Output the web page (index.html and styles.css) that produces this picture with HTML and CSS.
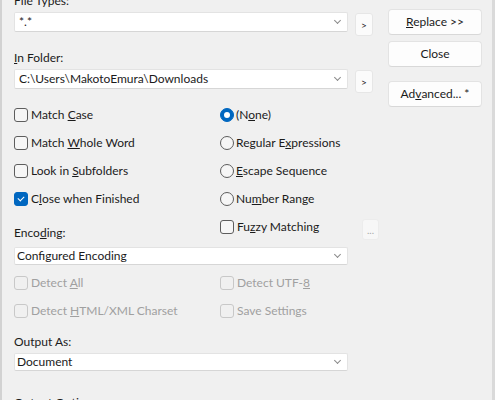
FILE: index.html
```html
<!DOCTYPE html>
<html>
<head>
<meta charset="utf-8">
<link rel="stylesheet" href="styles.css">
</head>
<body>
<div class="dialog">
  <div class="main">
    <div class="lbl lbl-first">File Types:</div>
    <div class="combo-row">
      <div class="combo edit"><span>*.*</span><span class="chev"></span></div>
      <button class="mini">&gt;</button>
    </div>
    <div class="lbl lbl-folder"><u>I</u>n Folder:</div>
    <div class="combo-row">
      <div class="combo edit"><span>C:\Users\MakotoEmura\Downloads</span><span class="chev"></span></div>
      <button class="mini">&gt;</button>
    </div>

    <div class="opts">
      <label class="opt"><span class="cb"></span><span>Match <u>C</u>ase</span></label>
      <label class="opt"><span class="rb on"></span><span>(N<u>o</u>ne)</span></label>
      <label class="opt"><span class="cb"></span><span>Match <u>W</u>hole Word</span></label>
      <label class="opt"><span class="rb"></span><span>Regular E<u>x</u>pressions</span></label>
      <label class="opt"><span class="cb"></span><span>Look in <u>S</u>ubfolders</span></label>
      <label class="opt"><span class="rb"></span><span><u>E</u>scape Sequence</span></label>
      <label class="opt"><span class="cb on"></span><span>C<u>l</u>ose when Finished</span></label>
      <label class="opt"><span class="rb"></span><span>Nu<u>m</u>ber Range</span></label>
      <div class="lbl enc-lbl">Enco<u>d</u>ing:</div>
      <div class="opt fuzzy">
        <span class="cb"></span><span>Fu<u>z</u>zy Matching</span>
        <button class="dots">...</button>
      </div>
    </div>

    <div class="combo list enc"><span>Configured Encoding</span><span class="chev"></span></div>

    <div class="opts detect">
      <label class="opt dis"><span class="cb"></span><span>Detect <u>A</u>ll</span></label>
      <label class="opt dis"><span class="cb"></span><span>Detect UTF-<u>8</u></span></label>
      <label class="opt dis"><span class="cb"></span><span>Detect <u>H</u>TML/XML Charset</span></label>
      <label class="opt dis"><span class="cb"></span><span>Save Settings</span></label>
    </div>

    <div class="lbl lbl-out">Output As:</div>
    <div class="combo list out"><span>Document</span><span class="chev"></span></div>

    <div class="lbl lbl-opts">Output Options:</div>
  </div>
  <div class="side">
    <button class="btn"><u>R</u>eplace &gt;&gt;</button>
    <button class="btn btn-close">Close</button>
    <button class="btn btn-adv">Ad<u>v</u>anced... *</button>
  </div>
</div>
</body>
</html>
```

FILE: styles.css
```css
html, body {
  margin: 0;
  padding: 0;
  height: 100%;
  overflow: hidden;
}
body {
  background: #f0f0f0;
  font-family: Lato, "Noto Sans", sans-serif;
  font-size: 12px;
  color: #1b1b1b;
}
u {
  text-decoration: underline;
  text-underline-offset: 1px;
  text-decoration-thickness: 1px;
}
.dialog {
  display: flex;
  height: 400px;
  border-left: 2px solid #d2d2d2;
  border-right: 3px solid #dadada;
  padding-left: 12px;
  box-sizing: border-box;
}
.main {
  width: 374px;
  margin-top: -7px;
  display: flex;
  flex-direction: column;
}
.side {
  width: 94px;
  display: flex;
  flex-direction: column;
  padding-top: 9px;
}
.lbl {
  height: 16px;
  line-height: 16px;
  white-space: nowrap;
}
.lbl-first { margin-bottom: 3px; }
.lbl-folder { margin-top: 14px; margin-bottom: 3px; }
.combo-row {
  display: flex;
  align-items: flex-start;
  gap: 7px;
}
.combo {
  width: 334px;
  height: 20px;
  box-sizing: border-box;
  background: #ffffff;
  border: 1px solid #e3e3e3;
  border-bottom-color: #d6d6d6;
  border-radius: 2px;
  display: flex;
  align-items: center;
  justify-content: space-between;
  line-height: 16px;
  white-space: nowrap;
}
.combo.edit { padding: 0 7px 0 4px; }
.combo.list { padding: 0 7px 0 2px; }
.chev {
  width: 4px;
  height: 4px;
  border-right: 1px solid #8a8a8a;
  border-bottom: 1px solid #8a8a8a;
  transform: rotate(45deg);
  margin-top: -3px;
}
button {
  font-family: inherit;
  font-size: 12px;
  color: #1b1b1b;
  cursor: default;
}
.mini {
  width: 18px;
  height: 23px;
  margin-top: 1px;
  padding: 0;
  background: #fbfbfb;
  border: 1px solid #e6e6e6;
  border-radius: 3px;
  font-size: 10px;
  line-height: 20px;
}
.opts {
  margin-top: 8px;
  display: grid;
  grid-template-columns: 206px 1fr;
  grid-auto-rows: 28px;
}
.opt {
  display: flex;
  align-items: center;
  white-space: nowrap;
  line-height: 16px;
}
.cb {
  width: 14px;
  height: 14px;
  box-sizing: border-box;
  border: 1px solid #5d5d5d;
  border-radius: 3px;
  background: #f6f6f6;
  margin-right: 3px;
  flex: none;
  position: relative;
}
.cb.on {
  background: #0067c0;
  border-color: #0067c0;
}
.cb.on::after {
  content: "";
  position: absolute;
  left: 3px;
  top: 3px;
  width: 5px;
  height: 3px;
  border-left: 1px solid #fff;
  border-bottom: 1px solid #fff;
  transform: rotate(-45deg);
}
.rb {
  width: 14px;
  height: 14px;
  box-sizing: border-box;
  border: 1px solid #5d5d5d;
  border-radius: 50%;
  background: #f6f6f6;
  margin-right: 2px;
  flex: none;
  position: relative;
}
.rb.on {
  background: #0067c0;
  border-color: #0067c0;
}
.rb.on::after {
  content: "";
  position: absolute;
  left: 3px;
  top: 3px;
  width: 6px;
  height: 6px;
  border-radius: 50%;
  background: #fff;
}
.enc-lbl {
  align-self: end;
}
.fuzzy { padding-right: 9px; }
.dots {
  margin-left: auto;
  width: 17px;
  height: 21px;
  padding: 0;
  margin-top: 5px;
  background: #f7f7f7;
  border: 1px solid #ececec;
  border-radius: 3px;
  color: #a8a8a8;
  font-size: 10px;
  line-height: 18px;
}
.enc { margin-top: 6px; }
.detect { margin-top: 4px; }
.dis { color: #a0a0a0; }
.dis .cb {
  border-color: #c8c8c8;
  background: #f0f0f0;
}
.lbl-out { margin-top: 9px; margin-bottom: 3px; }
.out { height: 21px; }
.lbl-opts { margin-top: 24px; }
.btn {
  width: 94px;
  height: 26px;
  padding: 0;
  background: #fdfdfd;
  border: 1px solid #e3e3e3;
  border-bottom-color: #d8d8d8;
  border-radius: 4px;
  line-height: 22px;
}
.btn-close { margin-top: 6px; }
.btn-adv { margin-top: 14px; }
```
